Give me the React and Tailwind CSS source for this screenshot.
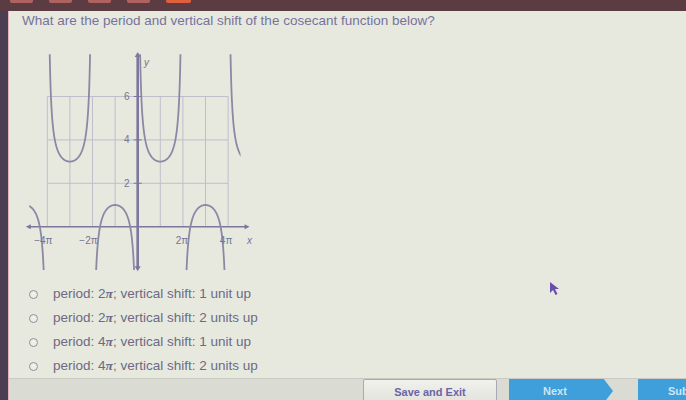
import React from "react";

const X = (u) => 117.7 + 22.6 * u;
const Y = (v) => 181.7 - 21.7 * v;

function branchPath(u0, u1) {
  const n = 400;
  const eps = 0.002;
  let d = "";
  for (let i = 0; i <= n; i++) {
    const u = u0 + eps + ((u1 - u0 - 2 * eps) * i) / n;
    let v = 1 / Math.sin((u * Math.PI) / 2) + 2;
    if (v > 10) v = 10;
    if (v < -4) v = -4;
    d += (i === 0 ? "M" : "L") + X(u).toFixed(2) + " " + Y(v).toFixed(2) + " ";
  }
  return d;
}

function Graph() {
  const branches = [
    [-6, -4],
    [-4, -2],
    [-2, 0],
    [0, 2],
    [2, 4],
    [4, 6],
  ];
  const grid = "#bfbecb";
  const curve = "#8d87a6";
  const axis = "#7d769d";
  const label = "#77738f";
  return (
    <svg width="240" height="230" viewBox="0 0 240 230" className="block ml-[-2px] mt-[16px]">
      <defs>
        <clipPath id="plotclip">
          <rect x={X(-4.8)} y={Y(7.95)} width={X(4.55) - X(-4.8)} height={Y(-2.0) - Y(7.95)} />
        </clipPath>
      </defs>
      {[2, 4, 6].map((v) => (
        <line key={"h" + v} x1={X(-4)} x2={X(4)} y1={Y(v)} y2={Y(v)} stroke={grid} strokeWidth="1" />
      ))}
      {[-4, -3, -2, -1, 1, 2, 3, 4].map((u) => (
        <line key={"v" + u} x1={X(u)} x2={X(u)} y1={Y(0)} y2={Y(6)} stroke={grid} strokeWidth="1" />
      ))}
      <line x1={X(-4.85)} x2={X(4.85)} y1={Y(0)} y2={Y(0)} stroke={axis} strokeWidth="1.4" />
      <path d={`M${X(-4.95)} ${Y(0)} l5 -2.5 l0 5 z`} fill={axis} />
      <path d={`M${X(4.95)} ${Y(0)} l-5 -2.5 l0 5 z`} fill={axis} />
      <line x1={X(0)} x2={X(0)} y1={Y(7.9)} y2={Y(-1.95)} stroke={axis} strokeWidth="2.6" />
      <path d={`M${X(0)} ${Y(8.05)} l-3 5 l6 0 z`} fill={axis} />
      <path d={`M${X(0)} ${Y(-2.05)} l-3 -5 l6 0 z`} fill={axis} />
      {[2, 4, 6].map((v) => (
        <line key={"t" + v} x1={X(0) - 4} x2={X(0) + 4} y1={Y(v)} y2={Y(v)} stroke={axis} strokeWidth="1" />
      ))}
      <g clipPath="url(#plotclip)">
        {branches.map(([a, b]) => (
          <path key={a} d={branchPath(a, b)} fill="none" stroke={curve} strokeWidth="1.8" />
        ))}
      </g>
      <g fontFamily="'Liberation Sans', Arial, sans-serif" fontSize="10" fill={label}>
        <text x={X(0) - 11} y={Y(6) + 3.5} textAnchor="middle">6</text>
        <text x={X(0) - 11} y={Y(4) + 3.5} textAnchor="middle">4</text>
        <text x={X(0) - 11} y={Y(2) + 3.5} textAnchor="middle">2</text>
        <text x={X(-4) - 4} y={Y(0) + 17} textAnchor="middle">−4π</text>
        <text x={X(-2) - 4} y={Y(0) + 17} textAnchor="middle">−2π</text>
        <text x={X(2) - 1} y={Y(0) + 17} textAnchor="middle">2π</text>
        <text x={X(4) - 2} y={Y(0) + 17} textAnchor="middle">4π</text>
        <text x={227} y={Y(0) + 17} fontStyle="italic">x</text>
        <text x={124} y={21} fontStyle="italic">y</text>
      </g>
    </svg>
  );
}

function Option({ n, text }) {
  return (
    <div className="flex items-center h-[24px]">
      <span className="ml-[7px] w-[9px] h-[9px] rounded-full border-[1.5px] border-[#8f8e9c] bg-[#eef0e8] shrink-0" />
      <span className="ml-[15px] text-[13.5px] leading-[16px] text-[#6d6a84] whitespace-nowrap">
        period: {n}
        <span className="font-['Liberation_Serif',serif] italic font-bold">π</span>; vertical shift: {text}
      </span>
    </div>
  );
}

export default function App() {
  return (
    <div className="w-[686px] h-[400px] overflow-hidden bg-[#5b3c42] flex flex-col relative font-['Liberation_Sans',Arial,sans-serif]">
      <div className="h-[11px] shrink-0 flex items-start gap-[16px] pl-[10px]">
        <div className="w-[23px] h-[3px] bg-[#b06260] rounded-b-[2px]" />
        <div className="w-[23px] h-[3px] bg-[#b06260] rounded-b-[2px]" />
        <div className="w-[23px] h-[3px] bg-[#b06260] rounded-b-[2px]" />
        <div className="w-[23px] h-[3px] bg-[#b06260] rounded-b-[2px]" />
        <div className="w-[25px] h-[3px] bg-[#e0603e] rounded-b-[2px]" />
      </div>
      <div className="flex flex-1 min-h-0">
        <div className="w-[8px] bg-[#4b3d52] shrink-0" />
        <div className="w-[1px] bg-[#e2b2bc] shrink-0" />
        <div className="flex-1 flex flex-col bg-[#e7e9df] min-w-0">
          <div className="h-[367px] shrink-0 pl-[13px] pt-[2px] overflow-hidden">
            <p className="text-[13.5px] leading-[16px] text-[#76739a] whitespace-nowrap">
              What are the period and vertical shift of the cosecant function below?
            </p>
            <Graph />
            <div className="mt-[7px] flex flex-col">
              <Option n="2" text="1 unit up" />
              <Option n="2" text="2 units up" />
              <Option n="4" text="1 unit up" />
              <Option n="4" text="2 units up" />
            </div>
          </div>
          <div className="flex-1 bg-[#dadbd2] border-t border-[#c9cac1] flex items-start pl-[354px] pt-0 overflow-hidden">
            <div className="w-[134px] h-[26px] shrink-0 border border-[#a9a9b3] bg-gradient-to-b from-[#f1f1ed] to-[#e2e2dc] rounded-[2px] flex items-center justify-center text-[11px] font-bold text-[#6b64a6]">
              Save and Exit
            </div>
            <div className="ml-[12px] mt-[-1px] w-[104px] h-[26px] shrink-0 bg-[#3e9fdb] rounded-l-[2px] [clip-path:polygon(0_0,94px_0,104px_13px,94px_26px,0_26px)] flex items-center pl-[34px] text-[11px] font-bold text-[#cde5f3]">
              Next
            </div>
            <div className="ml-[25px] mt-[-1px] w-[98px] h-[26px] shrink-0 bg-[#3e9fdb] rounded-[2px] flex items-center pl-[30px] text-[11px] font-bold text-[#cde5f3]">
              Submit
            </div>
          </div>
        </div>
      </div>
      <svg className="absolute left-[549px] top-[281px]" width="12" height="15" viewBox="0 0 12 15">
        <path d="M1 1 L1 12 L4 9 L6.5 14 L8.5 13 L6 8 L10 8 Z" fill="#6b4fae" />
      </svg>
    </div>
  );
}
